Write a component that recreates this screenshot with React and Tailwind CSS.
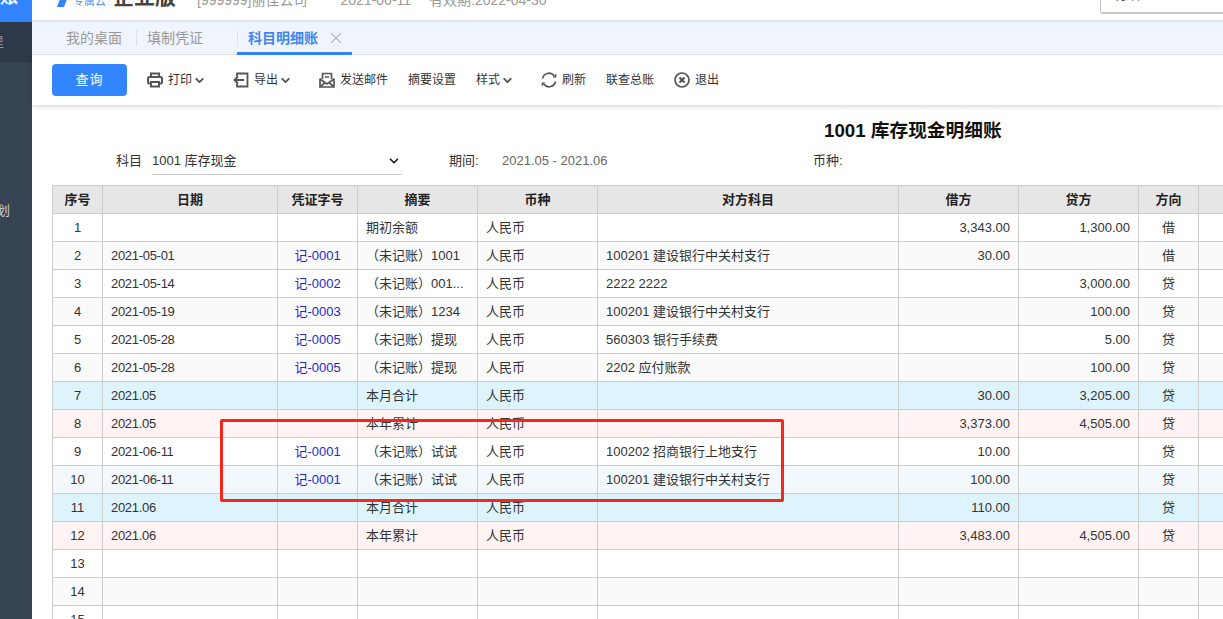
import { ChevronDown, X } from "lucide-react";

const font = "font-['Liberation_Sans','Noto_Sans_CJK_SC',sans-serif]";

const rows = [
  { no: 1, sum: "期初余额", debit: "3,343.00", credit: "1,300.00", dir: "借" },
  { no: 2, date: "2021-05-01", doc: "记-0001", sum: "（未记账）1001", other: "100201 建设银行中关村支行", debit: "30.00", dir: "借" },
  { no: 3, date: "2021-05-14", doc: "记-0002", sum: "（未记账）001...", other: "2222 2222", credit: "3,000.00", dir: "贷" },
  { no: 4, date: "2021-05-19", doc: "记-0003", sum: "（未记账）1234", other: "100201 建设银行中关村支行", credit: "100.00", dir: "贷" },
  { no: 5, date: "2021-05-28", doc: "记-0005", sum: "（未记账）提现", other: "560303 银行手续费", credit: "5.00", dir: "贷" },
  { no: 6, date: "2021-05-28", doc: "记-0005", sum: "（未记账）提现", other: "2202 应付账款", credit: "100.00", dir: "贷" },
  { no: 7, date: "2021.05", sum: "本月合计", debit: "30.00", credit: "3,205.00", dir: "贷", bg: "bg-[#def4fc]" },
  { no: 8, date: "2021.05", sum: "本年累计", debit: "3,373.00", credit: "4,505.00", dir: "贷", bg: "bg-[#fff4f3]" },
  { no: 9, date: "2021-06-11", doc: "记-0001", sum: "（未记账）试试", other: "100202 招商银行上地支行", debit: "10.00", dir: "贷" },
  { no: 10, date: "2021-06-11", doc: "记-0001", sum: "（未记账）试试", other: "100201 建设银行中关村支行", debit: "100.00", dir: "贷", bg: "bg-[#f2f8fc]" },
  { no: 11, date: "2021.06", sum: "本月合计", debit: "110.00", dir: "贷", bg: "bg-[#def4fc]" },
  { no: 12, date: "2021.06", sum: "本年累计", debit: "3,483.00", credit: "4,505.00", dir: "贷", bg: "bg-[#fff4f3]" },
  { no: 13 },
  { no: 14 },
  { no: 15 },
];

const PrinterIcon = () => (
  <svg width="16" height="16" viewBox="0 0 16 16" fill="none" stroke="#555" strokeWidth="2">
    <path d="M4 5V1.5h8V5" />
    <rect x="1" y="5" width="14" height="6.5" rx="1.5" />
    <rect x="4" y="10" width="8" height="4.5" fill="#fff" />
  </svg>
);

const ExportIcon = () => (
  <svg width="16" height="16" viewBox="0 0 16 16" fill="none" stroke="#555" strokeWidth="1.8">
    <path d="M4 4.5V1.5h10.5v13H4V11.5" />
    <path d="M11 8H1.5M5 4.5 1.5 8 5 11.5" />
  </svg>
);

const MailIcon = () => (
  <svg width="16" height="16" viewBox="0 0 16 16" fill="none" stroke="#555" strokeWidth="1.7">
    <path d="M3.5 7V1.5h9V7" />
    <path d="M1 6.5v8.5h14V6.5" />
    <path d="m1 7 7 5 7-5M1.5 14.5 6 10.5M14.5 14.5 10 10.5M6 5h4" />
  </svg>
);

const RefreshIcon = () => (
  <svg width="16" height="16" viewBox="0 0 16 16" fill="none" stroke="#555" strokeWidth="1.7">
    <path d="M1.5 6.5A6.6 6.6 0 0 1 13 3.6" />
    <path d="M14.5 9.5A6.6 6.6 0 0 1 3 12.4" />
    <path d="M15.3 1.6v3.8h-3.8z" fill="#555" stroke="none" />
    <path d="M0.7 14.4v-3.8h3.8z" fill="#555" stroke="none" />
  </svg>
);

const ExitIcon = () => (
  <svg width="16" height="16" viewBox="0 0 16 16" fill="none" stroke="#555">
    <circle cx="8" cy="8" r="7" strokeWidth="1.7" />
    <path d="m5.5 5.5 5 5m0-5-5 5" strokeWidth="2.2" />
  </svg>
);

const ToolItem = ({ icon, label, menu }) => (
  <div className={`flex items-center text-[12px] text-[#333] ${menu ? "mr-[7px]" : ""}`}>
    {icon && <span className="mr-[5px] flex">{icon}</span>}
    <span>{label}</span>
    {menu && <ChevronDown size={13} strokeWidth={3.5} className="ml-[1px] text-[#555]" />}
  </div>
);

const cell = "h-[28px] border border-[#ccc] p-0 px-2 overflow-hidden whitespace-nowrap";

const App = () => {
  return (
    <div className={`relative flex h-[619px] w-full overflow-hidden bg-white ${font}`}>
      {/* Sidebar */}
      <div className="flex w-[32px] shrink-0 flex-col overflow-hidden bg-[#374453] text-[13px] text-[#ccd2d8]">
        <div className="flex h-[22px] items-end overflow-hidden bg-[#3385ff]">
          <span className="mb-[11px] whitespace-nowrap text-[18px] font-bold text-white">账</span>
        </div>
        <div className="flex h-[40px] items-center bg-[#2d3848] text-[#8b929c]">
          <span className="-ml-[9px] whitespace-nowrap">里</span>
        </div>
        <div className="flex pt-[139px]">
          <span className="-ml-[16px] whitespace-nowrap">规划</span>
        </div>
      </div>

      <div className="flex min-w-0 flex-1 flex-col">
        {/* Header, cut off by the window */}
        <div className="flex h-[22px] shrink-0 items-end overflow-hidden border-b-2 border-[#e1e3e6] text-[14px] text-[#999]">
          <svg className="mb-[13px] ml-[25px]" width="10" height="8" viewBox="0 0 10 8">
            <path d="M3 0h7L7 8H0z" fill="#3385ff" />
          </svg>
          <span className="mb-[11px] ml-[6px] text-[11px] text-[#5b93ee]">专属云</span>
          <span className="mb-[8px] ml-[7px] text-[21px] font-bold text-[#444]">企业版</span>
          <span className="mb-[9px] ml-[21px]">[999999]丽佳公司</span>
          <span className="mb-[9px] ml-[33px]">2021-06-11</span>
          <span className="mb-[9px] ml-[18px]">有效期:2022-04-30</span>
          <div className="mb-[6px] ml-auto flex h-[20px] w-[123px] shrink-0 items-end rounded-bl-[3px] border-b-2 border-l border-[#c8c8c8] pl-[11px]">
            <span className="mb-[7px] text-[14px] text-[#444]">明细</span>
          </div>
        </div>

        {/* Tabs */}
        <div className="flex h-[33px] shrink-0 items-stretch whitespace-nowrap border-b border-[#e3e6ea] bg-[#f0f5fd] pl-[20px] text-[14px]">
          <div className="flex w-[84px] shrink-0 items-center">
            <span className="ml-[14px] shrink-0 text-[#999]">我的桌面</span>
            <span className="ml-[14px] h-[16px] w-px shrink-0 bg-[#dde1e6]" />
          </div>
          <div className="flex w-[101px] shrink-0 items-center pl-[11px] text-[#999]">填制凭证</div>
          <div className="relative flex w-[115px] shrink-0 items-center pl-[11px] font-bold text-[#3f85f5]">
            <span className="absolute left-0 top-[9px] h-[16px] w-px bg-[#dde1e6]" />
            <span>科目明细账</span>
            <X size={18} strokeWidth={1.5} className="ml-[9px] text-[#b5b5b5]" />
            <span className="absolute bottom-[-1px] left-0 h-[3px] w-full bg-[#3385ff]" />
          </div>
        </div>

        {/* Toolbar */}
        <div className="z-10 flex h-[50px] shrink-0 items-center gap-5 bg-white pl-[20px] shadow-[0_2px_4px_rgba(0,0,0,0.15)]">
          <button className="h-[32px] w-[75px] rounded-[4px] bg-[#3385ff] text-[13px] tracking-[1px] text-white">查询</button>
          <ToolItem icon={<PrinterIcon />} label="打印" menu />
          <ToolItem icon={<ExportIcon />} label="导出" menu />
          <ToolItem icon={<MailIcon />} label="发送邮件" />
          <ToolItem label="摘要设置" />
          <ToolItem label="样式" menu />
          <ToolItem icon={<RefreshIcon />} label="刷新" />
          <ToolItem label="联查总账" />
          <ToolItem icon={<ExitIcon />} label="退出" />
        </div>

        {/* Title */}
        <div className="whitespace-nowrap pl-[792px] pt-[14px] text-[18.7px] font-bold leading-[24px] text-[#111]">
          1001 库存现金明细账
        </div>

        {/* Filters */}
        <div className="flex h-[32px] items-center pl-[84px] pt-[4px] text-[13px] text-[#333]">
          <span className="w-[36px]">科目</span>
          <div className="flex h-[28px] w-[250px] items-center justify-between border-b border-[#ccc] pr-[1px]">
            <span>1001 库存现金</span>
            <ChevronDown size={14} strokeWidth={3} className="text-[#222]" />
          </div>
          <span className="ml-[47px] w-[53px]">期间:</span>
          <span className="w-[311px] text-[#666]">2021.05 - 2021.06</span>
          <span>币种:</span>
        </div>

        {/* Ledger table */}
        <div className="pl-[20px] pt-[10px]">
          <table className="w-[1246px] table-fixed border-collapse text-[13px] text-[#333]">
            <colgroup>
              <col className="w-[50px]" />
              <col className="w-[175px]" />
              <col className="w-[80px]" />
              <col className="w-[120px]" />
              <col className="w-[120px]" />
              <col className="w-[301px]" />
              <col className="w-[120px]" />
              <col className="w-[120px]" />
              <col className="w-[60px]" />
              <col className="w-[100px]" />
            </colgroup>
            <thead>
              <tr className="bg-[#e6e6e6] font-bold text-[#222]">
                {["序号", "日期", "凭证字号", "摘要", "币种", "对方科目", "借方", "贷方", "方向", ""].map((h, i) => (
                  <th key={i} className={`${cell} text-center font-bold`}>{h}</th>
                ))}
              </tr>
            </thead>
            <tbody>
              {rows.map((r) => (
                <tr key={r.no} className={r.bg || (r.no % 2 === 0 ? "bg-[#fafafa]" : "bg-white")}>
                  <td className={`${cell} text-center`}>{r.no}</td>
                  <td className={`${cell} tracking-[-0.3px]`}>{r.date}</td>
                  <td className={`${cell} text-center text-[#2a1fd6]`}>{r.doc}</td>
                  <td className={cell}>{r.sum}</td>
                  <td className={cell}>{r.dir ? "人民币" : ""}</td>
                  <td className={cell}>{r.other}</td>
                  <td className={`${cell} text-right`}>{r.debit}</td>
                  <td className={`${cell} text-right`}>{r.credit}</td>
                  <td className={`${cell} text-center`}>{r.dir}</td>
                  <td className={cell} />
                </tr>
              ))}
            </tbody>
          </table>
        </div>
      </div>

      {/* Red annotation drawn over the table */}
      <div className="absolute left-[220px] top-[419px] h-[83px] w-[564px] rounded-[2px] border-[3px] border-[#f5261c]" />
    </div>
  );
};

export default App;
